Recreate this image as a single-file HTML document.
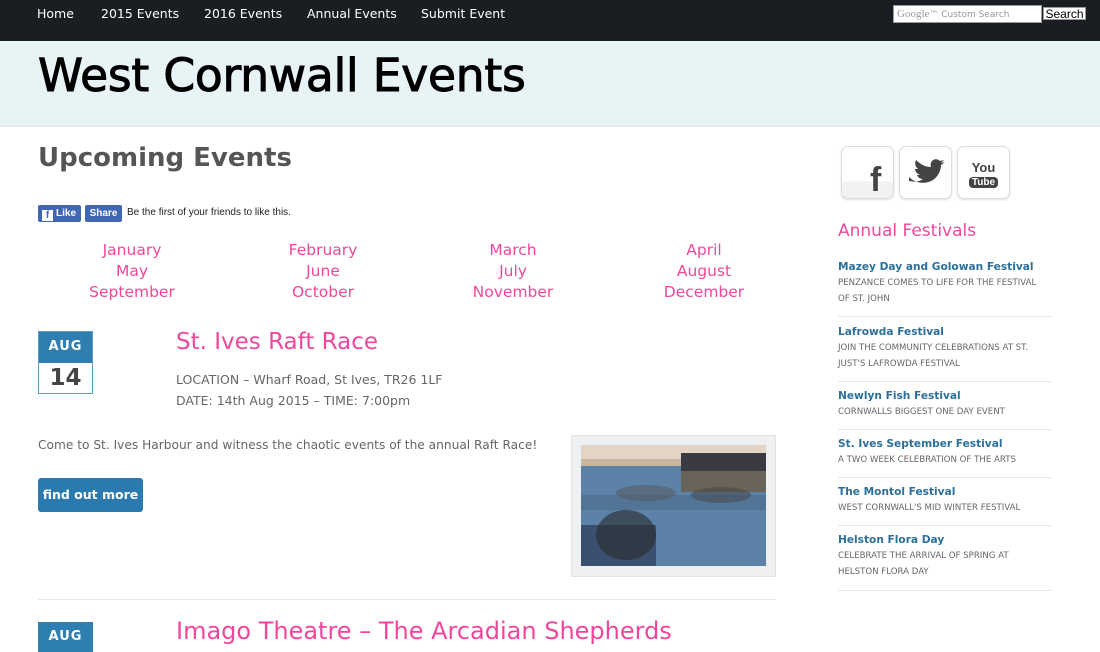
<!DOCTYPE html>
<html><head><meta charset="utf-8">
<style>
*{margin:0;padding:0;box-sizing:border-box}
body{width:1100px;height:640px;overflow:hidden;background:#fff;font-family:"DejaVu Sans","Liberation Sans",sans-serif;position:relative}
.abs{position:absolute}
.nav{left:0;top:0;width:1100px;height:41px;background:#1a1d21}
.nav a{position:absolute;top:6px;color:#fff;font-size:12.5px;text-decoration:none;white-space:nowrap}
.hdr{left:0;top:41px;width:1100px;height:86px;background:#e8f3f6;border-bottom:1px solid #dfe6e8}
.title{left:38px;top:49px;font-size:45.5px;color:#000;white-space:nowrap;-webkit-text-stroke:1px #000;letter-spacing:-0.2px}
.pink{color:#f0479b}
.month{position:absolute;font-size:15.5px;text-align:center;width:190px;line-height:21px}
.gray{color:#666}
.side h4{font-size:10.6px;color:#2b6f9b;font-weight:bold;margin-bottom:2px}
.side p{font-size:8.6px;color:#666;line-height:16px;text-transform:uppercase;width:202px}
.side .it{position:absolute;left:838px;width:214px;border-bottom:1px solid #e6e6e6}
.soc{position:absolute;top:146px;width:53px;height:53px;border:1px solid #ddd;border-radius:7px;background:#fff;box-shadow:0 1px 2px #ddd}
</style></head><body>
<div class="abs nav">
<a style="left:37px">Home</a><a style="left:101px">2015 Events</a><a style="left:204px">2016 Events</a><a style="left:307px">Annual Events</a><a style="left:421px">Submit Event</a>
<div class="abs" style="left:893px;top:5px;width:149px;height:18px;background:#fff;border:1px solid #999;font-size:9px;color:#999;padding:2px 3px;white-space:nowrap"><span style="font-family:'Liberation Serif',serif;font-size:11px">Google</span>™ Custom Search</div>
<div class="abs" style="left:1043px;top:7px;width:43px;height:13px;background:#fff;border:1px solid #999;font-size:12px;color:#000;font-family:'Liberation Sans',sans-serif;line-height:12px;text-align:center">Search</div>
</div>
<div class="abs hdr"></div>
<div class="abs title">West Cornwall Events</div>

<div class="abs" style="left:38px;top:143px;font-size:26px;font-weight:bold;color:#555">Upcoming Events</div>
<div class="abs" style="left:38px;top:205px;width:43px;height:17px;background:#4267b2;border-radius:2px;color:#fff;font-size:10px;font-weight:bold;font-family:'Liberation Sans',sans-serif;line-height:17px;padding-left:4px"><span style="display:inline-block;width:11px;height:11px;background:#fff;color:#4267b2;font-size:10px;line-height:12px;text-align:center;vertical-align:-2px;margin-right:3px">f</span>Like</div>
<div class="abs" style="left:85px;top:205px;width:37px;height:17px;background:#4267b2;border-radius:2px;color:#fff;font-size:10px;font-weight:bold;font-family:'Liberation Sans',sans-serif;line-height:17px;text-align:center">Share</div>
<div class="abs" style="left:127px;top:207px;font-size:10px;font-family:'Liberation Sans',sans-serif;color:#222">Be the first of your friends to like this.</div>

<div class="month pink" style="left:37px;top:240px">January<br>May<br>September</div>
<div class="month pink" style="left:228px;top:240px">February<br>June<br>October</div>
<div class="month pink" style="left:418px;top:240px">March<br>July<br>November</div>
<div class="month pink" style="left:609px;top:240px">April<br>August<br>December</div>

<div class="abs" style="left:38px;top:331px;width:55px;height:63px;border:1px solid #5a9cc6">
<div style="height:31px;background:#2e7fb0;color:#fff;font-weight:bold;font-size:13px;text-align:center;line-height:30px;letter-spacing:1px">AUG</div>
<div style="color:#444;font-weight:bold;font-size:23px;text-align:center;line-height:30px">14</div></div>
<div class="abs pink" style="left:176px;top:329px;font-size:23px">St. Ives Raft Race</div>
<div class="abs gray" style="left:176px;top:369px;font-size:12.5px;line-height:21px">LOCATION – Wharf Road, St Ives, TR26 1LF<br>DATE: 14th Aug 2015 – TIME: 7:00pm</div>
<div class="abs gray" style="left:38px;top:438px;font-size:12.2px">Come to St. Ives Harbour and witness the chaotic events of the annual Raft Race!</div>
<div class="abs" style="left:38px;top:478px;width:105px;height:34px;background:#2a7aaf;border-radius:3px;color:#fff;font-weight:bold;font-size:12.5px;line-height:33px;text-align:center">find out more</div>
<div class="abs" style="left:571px;top:435px;width:205px;height:142px;background:#eef0f2;border:1px solid #e2e4e6"></div>
<svg class="abs" style="left:581px;top:445px" width="185" height="121" viewBox="0 0 185 121">
<rect width="185" height="121" fill="#5c82a8"/><rect width="185" height="14" fill="#e4d4c6"/><rect y="14" width="110" height="7" fill="#c8b8a0"/>
<rect x="100" y="25" width="85" height="22" fill="#6a6458"/><rect x="100" y="8" width="85" height="18" fill="#3a3a42"/>
<rect x="0" y="80" width="75" height="41" fill="#3b5070"/><rect x="0" y="50" width="185" height="15" fill="#4a6a8c" opacity=".6"/>
<ellipse cx="45" cy="90" rx="30" ry="25" fill="#2a2a2a" opacity=".6"/><ellipse cx="140" cy="50" rx="30" ry="8" fill="#444" opacity=".5"/><ellipse cx="65" cy="48" rx="30" ry="8" fill="#555" opacity=".5"/>
</svg>
<div class="abs" style="left:38px;top:599px;width:738px;height:1px;background:#e8e8e8"></div>
<div class="abs" style="left:38px;top:622px;width:55px;height:30px;background:#2e7fb0;color:#fff;font-weight:bold;font-size:13px;text-align:center;line-height:30px;letter-spacing:1px">AUG</div>
<div class="abs pink" style="left:176px;top:617px;font-size:24px;white-space:nowrap">Imago Theatre – The Arcadian Shepherds</div>

<div class="soc" style="left:841px;background:linear-gradient(#fff 68%,#f2f2f2 68%)"><div style="position:absolute;left:28px;top:14px;font:bold 34px 'Liberation Sans',sans-serif;color:#444">f</div></div>
<div class="soc" style="left:899px"><svg width="53" height="53" viewBox="0 0 53 53"><path d="M9 30c6 6 16 8 24 3 6-4 8-11 8-15l4-3-4 1 3-3-4 1c-3-3-8-2-9 2-1 2 0 3 0 4-6 0-11-3-15-7-2 4 0 7 2 9l-3 0c0 3 3 5 5 6h-3c1 3 4 4 6 4-4 3-9 3-14 2z" fill="#444"/></svg></div>
<div class="soc" style="left:957px;text-align:center;font:bold 13px 'Liberation Sans',sans-serif;color:#444;padding-top:14px;line-height:13px">You<br><span style="background:#444;color:#fff;border-radius:4px;padding:0 3px;font-size:10px">Tube</span></div>
<div class="abs pink" style="left:838px;top:221px;font-size:17px">Annual Festivals</div>
<div class="side">
<div class="it" style="top:261px;height:56px"><h4>Mazey Day and Golowan Festival</h4><p>Penzance comes to life for the festival of St. John</p></div>
<div class="it" style="top:326px;height:56px"><h4>Lafrowda Festival</h4><p>Join the community celebrations at St. Just's Lafrowda Festival</p></div>
<div class="it" style="top:390px;height:40px"><h4>Newlyn Fish Festival</h4><p>Cornwalls biggest one day event</p></div>
<div class="it" style="top:438px;height:40px"><h4>St. Ives September Festival</h4><p>A two week celebration of the arts</p></div>
<div class="it" style="top:486px;height:40px"><h4>The Montol Festival</h4><p>West Cornwall's mid winter festival</p></div>
<div class="it" style="top:534px;height:57px"><h4>Helston Flora Day</h4><p>Celebrate the arrival of spring at Helston Flora Day</p></div>
</div>
</body></html>
